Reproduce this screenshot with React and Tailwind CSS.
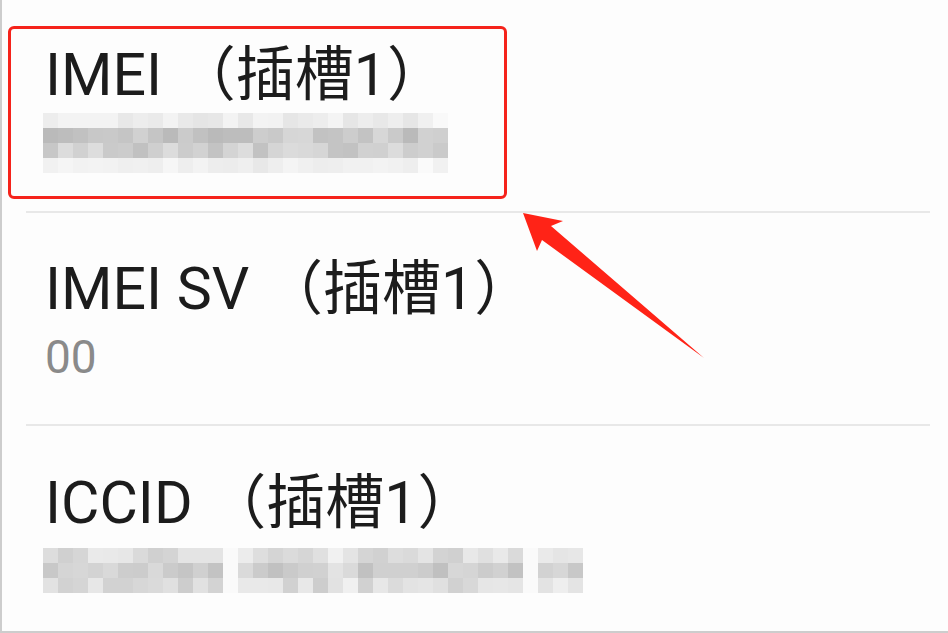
import React from "react";

const rnd = (n) => {
  const x = Math.sin(n * 12.9898 + 78.233) * 43758.5453;
  return x - Math.floor(x);
};

function Mosaic({ rows, cols, ranges, seed, white = [], light = [] }) {
  const cells = [];
  for (let r = 0; r < rows; r++) {
    for (let c = 0; c < cols; c++) {
      const [lo, hi] = ranges[r];
      let v = Math.round(lo + (hi - lo) * rnd(seed + r * 97 + c * 13));
      if (white.includes(c)) v = 250;
      else if (light.includes(c)) v = Math.min(246, v + 18);
      if (c >= cols - 2) v = Math.min(250, v + 10);
      cells.push(
        <div
          key={r + "-" + c}
          className="w-[15px] h-[15px]"
          style={{ backgroundColor: `rgb(${v},${v},${v})` }}
        />
      );
    }
  }
  return (
    <div
      className="grid ml-[-2px]"
      style={{ gridTemplateColumns: `repeat(${cols}, 15px)` }}
    >
      {cells}
    </div>
  );
}

function Title({ children }) {
  return (
    <div className="text-[59px] leading-[70px] text-[#1c1c1c] whitespace-pre">
      {children}
    </div>
  );
}

function Divider() {
  return <div className="ml-[24px] mr-[18px] h-[2px] bg-[#e8e8e8]" />;
}

export default function App() {
  return (
    <div className="relative w-[948px] h-[633px] bg-[#fdfdfd] border-l-2 border-b-2 border-[#cdcdcd] overflow-hidden font-[Roboto,'Noto_Sans_CJK_SC',sans-serif]">
      <div className="flex flex-col">
        <div className="h-[211px] pl-[43px] pt-[40px]">
          <Title>IMEI （插槽1）</Title>
          <div className="mt-[3px]">
            <Mosaic
              rows={4}
              cols={27}
              seed={11}
              ranges={[
                [228, 244],
                [184, 216],
                [190, 222],
                [230, 246],
              ]}
            />
          </div>
        </div>
        <Divider />
        <div className="h-[211px] pl-[43px] pt-[41px]">
          <Title>IMEI SV （插槽1）</Title>
          <div className="mt-[7px] text-[46px] leading-[52px] text-[#8a8a8a]">
            00
          </div>
        </div>
        <Divider />
        <div className="h-[205px] pl-[43px] pt-[42px]">
          <Title>ICCID （插槽1）</Title>
          <div className="mt-[10px]">
            <Mosaic
              rows={3}
              cols={36}
              seed={53}
              white={[12, 32]}
              light={[19, 20]}
              ranges={[
                [206, 236],
                [188, 220],
                [204, 234],
              ]}
            />
          </div>
        </div>
      </div>

      <div className="absolute left-[6px] top-[26px] w-[499px] h-[173px] border-[3px] border-[#f5231b] rounded-[6px]" />

      <svg
        className="absolute left-[-2px] top-0 pointer-events-none"
        width="948"
        height="633"
        viewBox="0 0 948 633"
      >
        <polygon
          points="523,213 563,221 551,226 704,358 542,240 537,251"
          fill="#ff2317"
        />
      </svg>
    </div>
  );
}
